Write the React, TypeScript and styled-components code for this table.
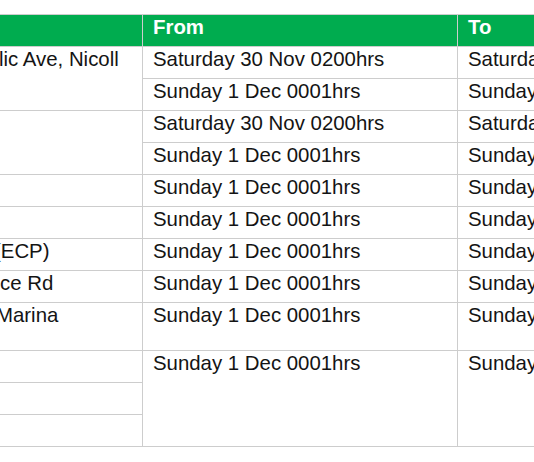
import React from "react";
import styled, { createGlobalStyle } from "styled-components";

const Global = createGlobalStyle`
  html, body { margin: 0; padding: 0; background: #ffffff; overflow: hidden; }
  body { width: 534px; height: 462px; font-family: "Liberation Sans", Arial, sans-serif; }
`;

const Page = styled.div`
  padding-top: 14px;
  width: 534px;
  overflow: hidden;
`;

const Grid = styled.div`
  display: grid;
  margin-left: -20px;
  width: max-content;
  grid-template-columns: 161px 314px 300px;
  grid-template-rows: repeat(9, 31px) 47px repeat(3, 31px);
  gap: 1px;
  padding: 1px;
  background: #cdcdcd;
`;

const Head = styled.div`
  background: #00ac4f;
  color: #ffffff;
  font-weight: 700;
  font-size: 20.4px;
  line-height: 23px;
  padding: 1px 10px 0 10px;
  white-space: nowrap;
  overflow: hidden;
`;

const Cell = styled.div<{ $span?: number; $indent?: number; $first?: boolean }>`
  background: #ffffff;
  color: #141414;
  font-size: 20.4px;
  line-height: 23px;
  padding: 1px 10px 0 ${(p) => (p.$first ? 19 : 10)}px;
  text-indent: ${(p) => p.$indent ?? 0}px;
  white-space: nowrap;
  overflow: hidden;
  grid-row: ${(p) => (p.$span ? `span ${p.$span}` : "auto")};
`;

const SAT_FROM = "Saturday 30 Nov 0200hrs";
const SUN_FROM = "Sunday 1 Dec 0001hrs";
const SAT_TO = "Saturday 30 Nov 2359hrs";
const SUN_TO = "Sunday 1 Dec 1130hrs";

export default function App() {
  return (
    <>
      <Global />
      <Page>
        <Grid>
          <Head />
          <Head>From</Head>
          <Head>To</Head>

          <Cell $first $span={2} $indent={-1}>lic Ave, Nicoll</Cell>
          <Cell>{SAT_FROM}</Cell>
          <Cell>{SAT_TO}</Cell>
          <Cell>{SUN_FROM}</Cell>
          <Cell>{SUN_TO}</Cell>

          <Cell $first $span={2} />
          <Cell>{SAT_FROM}</Cell>
          <Cell>{SAT_TO}</Cell>
          <Cell>{SUN_FROM}</Cell>
          <Cell>{SUN_TO}</Cell>

          <Cell $first />
          <Cell>{SUN_FROM}</Cell>
          <Cell>{SUN_TO}</Cell>

          <Cell $first />
          <Cell>{SUN_FROM}</Cell>
          <Cell>{SUN_TO}</Cell>

          <Cell $first $indent={-6}>(ECP)</Cell>
          <Cell>{SUN_FROM}</Cell>
          <Cell>{SUN_TO}</Cell>

          <Cell $first $indent={0}>ce Rd</Cell>
          <Cell>{SUN_FROM}</Cell>
          <Cell>{SUN_TO}</Cell>

          <Cell $first $indent={-4}>Marina</Cell>
          <Cell>{SUN_FROM}</Cell>
          <Cell>{SUN_TO}</Cell>

          <Cell $first />
          <Cell $span={3}>{SUN_FROM}</Cell>
          <Cell $span={3}>{SUN_TO}</Cell>
          <Cell $first />
          <Cell $first />
        </Grid>
      </Page>
    </>
  );
}
